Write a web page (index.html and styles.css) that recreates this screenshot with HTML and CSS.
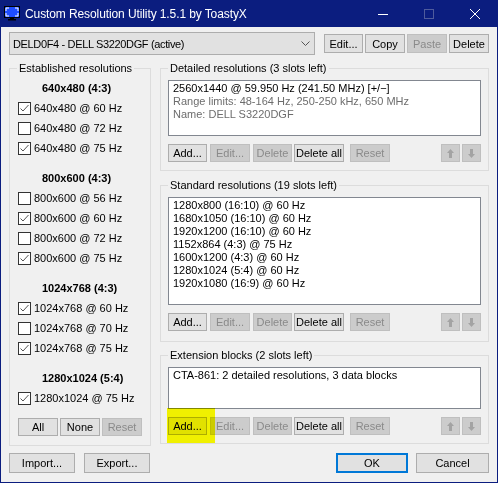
FILE: index.html
```html
<!DOCTYPE html>
<html>
<head>
<meta charset="utf-8">
<link rel="stylesheet" href="styles.css">
</head>
<body>
<div class="window">
  <div class="titlebar">
    <svg class="appicon" width="16" height="16" viewBox="0 0 16 16">
      <rect x="0.5" y="0.5" width="15" height="11" fill="#1f4dff" stroke="#000"/>
      <path d="M2 5V2h3M11 2h3v3M14 7v3h-3M5 10H2V7" fill="none" stroke="#fff" stroke-width="1"/>
      <rect x="6" y="12" width="4" height="1" fill="#000"/>
      <rect x="4" y="13" width="8" height="1.5" fill="#000"/>
    </svg>
    <span class="title">Custom Resolution Utility 1.5.1 by ToastyX</span>
    <div class="caps">
      <div class="cap"><svg width="10" height="10" viewBox="0 0 10 10"><path d="M0 5.5h10" stroke="#fff" stroke-width="1"/></svg></div>
      <div class="cap"><svg width="10" height="10" viewBox="0 0 10 10"><rect x="0.5" y="0.5" width="9" height="9" fill="none" stroke="#4f5b9c" stroke-width="1"/></svg></div>
      <div class="cap"><svg width="10" height="10" viewBox="0 0 10 10"><path d="M0 0L10 10M10 0L0 10" stroke="#fff" stroke-width="1"/></svg></div>
    </div>
  </div>
  <div class="client">
    <div class="toprow">
      <div class="combo"><span class="combo-text">DELD0F4 - DELL S3220DGF (active)</span><svg class="chev" width="9" height="5" viewBox="0 0 9 5"><polyline points="0.5,0.5 4.5,4.5 8.5,0.5" fill="none" stroke="#555" stroke-width="1"/></svg></div>
      <button class="btn w39">Edit...</button>
      <button class="btn w40 ml2">Copy</button>
      <button class="btn w40 ml2 dis">Paste</button>
      <button class="btn w40 ml2">Delete</button>
    </div>
    <div class="main">
      <fieldset class="group left">
        <legend>Established resolutions</legend>
        <div class="section">
          <div class="sec-head">640x480 (4:3)</div>
          <div class="cb"><span class="box on"></span>640x480 @ 60 Hz</div>
          <div class="cb"><span class="box"></span>640x480 @ 72 Hz</div>
          <div class="cb"><span class="box on"></span>640x480 @ 75 Hz</div>
        </div>
        <div class="section">
          <div class="sec-head">800x600 (4:3)</div>
          <div class="cb"><span class="box"></span>800x600 @ 56 Hz</div>
          <div class="cb"><span class="box on"></span>800x600 @ 60 Hz</div>
          <div class="cb"><span class="box"></span>800x600 @ 72 Hz</div>
          <div class="cb"><span class="box on"></span>800x600 @ 75 Hz</div>
        </div>
        <div class="section">
          <div class="sec-head">1024x768 (4:3)</div>
          <div class="cb"><span class="box on"></span>1024x768 @ 60 Hz</div>
          <div class="cb"><span class="box"></span>1024x768 @ 70 Hz</div>
          <div class="cb"><span class="box on"></span>1024x768 @ 75 Hz</div>
        </div>
        <div class="section">
          <div class="sec-head">1280x1024 (5:4)</div>
          <div class="cb"><span class="box on"></span>1280x1024 @ 75 Hz</div>
        </div>
        <div class="lbtns">
          <button class="btn w40">All</button>
          <button class="btn w40">None</button>
          <button class="btn w40 dis">Reset</button>
        </div>
      </fieldset>
      <div class="rightcol">
        <fieldset class="group rg detailed">
          <legend>Detailed resolutions (3 slots left)</legend>
          <div class="listbox lb-det">
            <div>2560x1440 @ 59.950 Hz (241.50 MHz) [+/−]</div>
            <div class="gray">Range limits: 48-164 Hz, 250-250 kHz, 650 MHz</div>
            <div class="gray">Name: DELL S3220DGF</div>
          </div>
          <div class="rbtns">
            <button class="btn w39">Add...</button>
            <button class="btn w40 ml3 dis">Edit...</button>
            <button class="btn w39 ml3 dis">Delete</button>
            <button class="btn w50 ml2">Delete all</button>
            <button class="btn w40 ml6 dis">Reset</button>
            <span class="spacer"></span>
            <button class="btn arr dis"><svg width="7" height="9" viewBox="0 0 7 9"><polygon points="3.5,0 7,4 5,4 5,9 2,9 2,4 0,4" fill="#a3a3a3"/></svg></button>
            <button class="btn arr ml2 dis"><svg width="7" height="9" viewBox="0 0 7 9"><polygon points="3.5,9 7,5 5,5 5,0 2,0 2,5 0,5" fill="#a3a3a3"/></svg></button>
          </div>
        </fieldset>
        <fieldset class="group rg standard">
          <legend>Standard resolutions (19 slots left)</legend>
          <div class="listbox lb-std">
            <div>1280x800 (16:10) @ 60 Hz</div>
            <div>1680x1050 (16:10) @ 60 Hz</div>
            <div>1920x1200 (16:10) @ 60 Hz</div>
            <div>1152x864 (4:3) @ 75 Hz</div>
            <div>1600x1200 (4:3) @ 60 Hz</div>
            <div>1280x1024 (5:4) @ 60 Hz</div>
            <div>1920x1080 (16:9) @ 60 Hz</div>
          </div>
          <div class="rbtns">
            <button class="btn w39">Add...</button>
            <button class="btn w40 ml3 dis">Edit...</button>
            <button class="btn w39 ml3 dis">Delete</button>
            <button class="btn w50 ml2">Delete all</button>
            <button class="btn w40 ml6 dis">Reset</button>
            <span class="spacer"></span>
            <button class="btn arr dis"><svg width="7" height="9" viewBox="0 0 7 9"><polygon points="3.5,0 7,4 5,4 5,9 2,9 2,4 0,4" fill="#a3a3a3"/></svg></button>
            <button class="btn arr ml2 dis"><svg width="7" height="9" viewBox="0 0 7 9"><polygon points="3.5,9 7,5 5,5 5,0 2,0 2,5 0,5" fill="#a3a3a3"/></svg></button>
          </div>
        </fieldset>
        <fieldset class="group rg extension">
          <legend>Extension blocks (2 slots left)</legend>
          <div class="listbox lb-ext">
            <div>CTA-861: 2 detailed resolutions, 3 data blocks</div>
          </div>
          <div class="rbtns">
            <button class="btn w39">Add...</button>
            <button class="btn w40 ml3 dis">Edit...</button>
            <button class="btn w39 ml3 dis">Delete</button>
            <button class="btn w50 ml2">Delete all</button>
            <button class="btn w40 ml6 dis">Reset</button>
            <span class="spacer"></span>
            <button class="btn arr dis"><svg width="7" height="9" viewBox="0 0 7 9"><polygon points="3.5,0 7,4 5,4 5,9 2,9 2,4 0,4" fill="#a3a3a3"/></svg></button>
            <button class="btn arr ml2 dis"><svg width="7" height="9" viewBox="0 0 7 9"><polygon points="3.5,9 7,5 5,5 5,0 2,0 2,5 0,5" fill="#a3a3a3"/></svg></button>
            <span class="highlight"></span>
          </div>
        </fieldset>
      </div>
    </div>
    <div class="bottomrow">
      <button class="btn w66">Import...</button>
      <button class="btn w66 ml9">Export...</button>
      <span class="spacer"></span>
      <button class="btn w72 ok">OK</button>
      <button class="btn w73 ml8">Cancel</button>
    </div>
  </div>
</div>
</body>
</html>
```

FILE: styles.css
```css
* { box-sizing: border-box; }
html, body { margin: 0; padding: 0; }
body {
  width: 498px;
  height: 483px;
  overflow: hidden;
  background: #f0f0f0;
  font-family: "Liberation Sans", Arial, sans-serif;
  font-size: 11px;
  color: #000;
}
.window {
  width: 498px;
  height: 483px;
  display: flex;
  flex-direction: column;
  background: #f0f0f0;
}
.titlebar {
  height: 27px;
  flex: none;
  background: #0b1d7f;
  display: flex;
  align-items: center;
  padding-left: 4px;
}
.appicon { flex: none; margin-right: 5px; margin-top: 1px; }
.title {
  flex: 1;
  color: #fff;
  font-size: 12px;
  letter-spacing: -0.1px;
  white-space: nowrap;
}
.caps { display: flex; height: 27px; }
.cap {
  width: 46px;
  display: flex;
  align-items: center;
  justify-content: center;
}
.client {
  flex: 1;
  border: 1px solid #0b1d7f;
  border-top: 0;
  padding: 5px 8px 0 8px;
  display: flex;
  flex-direction: column;
}
.toprow {
  display: flex;
  align-items: center;
  height: 23px;
}
.combo {
  width: 306px;
  height: 23px;
  margin-right: 9px;
  border: 1px solid #adadad;
  background: #e1e1e1;
  display: flex;
  align-items: center;
  padding-left: 3px;
  white-space: nowrap;
}
.combo-text { letter-spacing: -0.35px; }
.chev { margin-left: auto; margin-right: 4px; }
.btn {
  appearance: none;
  margin: 0;
  padding: 0;
  font: inherit;
  color: #000;
  height: 19px;
  border: 1px solid #adadad;
  background: #e1e1e1;
  display: flex;
  align-items: center;
  justify-content: center;
  white-space: nowrap;
  flex: none;
}
.btn.dis {
  background: #cccccc;
  border-color: #bfbfbf;
  color: #8a8a8a;
}
.w39 { width: 39px; }
.w40 { width: 40px; }
.w50 { width: 50px; }
.w66 { width: 66px; }
.w72 { width: 72px; }
.w73 { width: 73px; }
.ml2 { margin-left: 2px; }
.ml3 { margin-left: 3px; }
.ml6 { margin-left: 6px; }
.ml8 { margin-left: 8px; }
.ml9 { margin-left: 9px; }
.spacer { flex: 1; }

.main {
  display: flex;
  margin-top: 6px;
  gap: 9px;
}
.group {
  margin: 0;
  min-width: 0;
  border: 1px solid #dcdcdc;
}
.group legend {
  padding: 0 2px;
  height: 14px;
  line-height: 14px;
  white-space: nowrap;
}
.left {
  width: 142px;
  height: 385px;
  padding: 3px 7px 0 8px;
}
.left legend { margin-left: -1px; }
.sec-head {
  height: 20px;
  line-height: 20px;
  font-weight: bold;
  padding-left: 24px;
  white-space: nowrap;
}
.cb {
  height: 20px;
  display: flex;
  align-items: center;
  gap: 3px;
  white-space: nowrap;
}
.box {
  width: 13px;
  height: 13px;
  flex: none;
  border: 1px solid #333;
  background: #fff;
}
.box.on {
  background: #fff url("data:image/svg+xml;utf8,<svg xmlns='http://www.w3.org/2000/svg' width='11' height='11' viewBox='0 0 11 11'><polyline points='1.5,5.5 4,8 9.5,2' fill='none' stroke='%23555555' stroke-width='1'/></svg>") no-repeat center;
}
.section + .section { margin-top: 10px; }
.lbtns {
  margin-top: 10px;
  display: flex;
  gap: 2px;
}
.lbtns .btn { height: 18px; }

.rightcol {
  width: 329px;
  display: flex;
  flex-direction: column;
}
.rg { padding: 5px 7px 0 7px; }
.detailed { height: 110px; }
.standard { height: 164px; margin-top: 7px; }
.extension { height: 96px; margin-top: 6px; }
.listbox {
  border: 1px solid #828790;
  background: #fff;
  padding: 1px 4px;
  line-height: 13px;
  white-space: nowrap;
}
.lb-det { height: 56px; }
.lb-std { height: 108px; }
.lb-ext { height: 42px; padding-top: 1px; }
.gray { color: #6d6d6d; }
.rbtns {
  display: flex;
  margin-top: 8px;
  height: 18px;
  position: relative;
}
.rbtns .btn { height: 18px; }
.btn.arr { width: 19px; }
.highlight {
  position: absolute;
  left: -1px;
  top: -9px;
  width: 48px;
  height: 35px;
  background: #ffff00;
  mix-blend-mode: multiply;
  pointer-events: none;
}
.bottomrow {
  display: flex;
  margin-top: 7px;
  height: 20px;
}
.bottomrow .btn { height: 20px; }
.btn.ok { border: 2px solid #0078d7; }
```
